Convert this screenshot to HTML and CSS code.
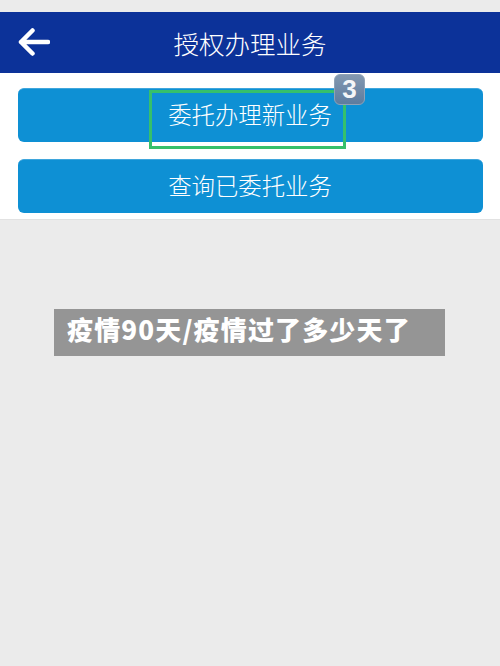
FILE: index.html
```html
<!DOCTYPE html>
<html lang="zh">
<head>
<meta charset="utf-8">
<title>授权办理业务</title>
<link rel="stylesheet" href="styles.css">
</head>
<body>
<div class="status"></div>
<header class="header">
  <svg class="back" width="32" height="28" viewBox="0 0 32 28" aria-hidden="true">
    <path d="M14.500 2.500 L3 14 L14.500 25.500 M3 14 H30" fill="none" stroke="#fff" stroke-width="4.500" stroke-linecap="round" stroke-linejoin="round"/>
  </svg>
  <h1 class="title">授权办理业务</h1>
</header>
<main class="panel">
  <button class="btn">委托办理新业务</button>
  <button class="btn">查询已委托业务</button>
  <div class="highlight"></div>
  <div class="badge">3</div>
</main>
<div class="caption">疫情90天/疫情过了多少天了</div>
</body>
</html>
```

FILE: styles.css
```css
* { box-sizing: border-box; }
html, body { margin: 0; padding: 0; }
body {
  width: 500px;
  height: 666px;
  overflow: hidden;
  background: #ebebeb;
  font-family: "Noto Sans CJK SC", "Liberation Sans", sans-serif;
}
.status { height: 12px; background: #ebebeb; }
.header {
  position: relative;
  height: 61px;
  background: #0c3299;
  display: flex;
  align-items: center;
  justify-content: center;
}
.back { position: absolute; left: 18px; top: 16px; }
.title {
  margin: 0;
  color: #fff;
  font-size: 25.500px;
  font-weight: 300;
  line-height: 61px;
}
.panel {
  position: relative;
  height: 147px;
  background: #fff;
  border-bottom: 1px solid #e2e2e2;
  padding: 15px 17.500px 0;
  display: flex;
  flex-direction: column;
  gap: 17px;
}
.btn {
  display: block;
  width: 100%;
  height: 54px;
  border: 0;
  border-top: 1px solid #3fa6dc;
  border-radius: 6px;
  background: #0e90d4;
  color: #fff;
  font-family: inherit;
  font-size: 23.400px;
  font-weight: 300;
  padding: 0 0 3px;
}
.highlight {
  position: absolute;
  left: 149px;
  top: 17px;
  width: 197px;
  height: 59px;
  border: 3px solid #36c06b;
}
.badge {
  position: absolute;
  left: 334px;
  top: 1px;
  width: 31px;
  height: 31px;
  border-radius: 6px;
  background: linear-gradient(#8398b0, #5d7c9f);
  border: 1px solid #8fa2b6;
  color: #f4f6f8;
  font-family: "Liberation Sans", sans-serif;
  font-weight: 700;
  font-size: 26px;
  line-height: 29px;
  text-align: center;
}
.caption {
  margin: 89px 0 0 54px;
  width: 391px;
  height: 47px;
  padding-left: 13px;
  background: #959595;
  color: #fff;
  font-size: 26px;
  font-weight: 900;
  letter-spacing: 1.150px;
  line-height: 39px;
  white-space: nowrap;
}
```
